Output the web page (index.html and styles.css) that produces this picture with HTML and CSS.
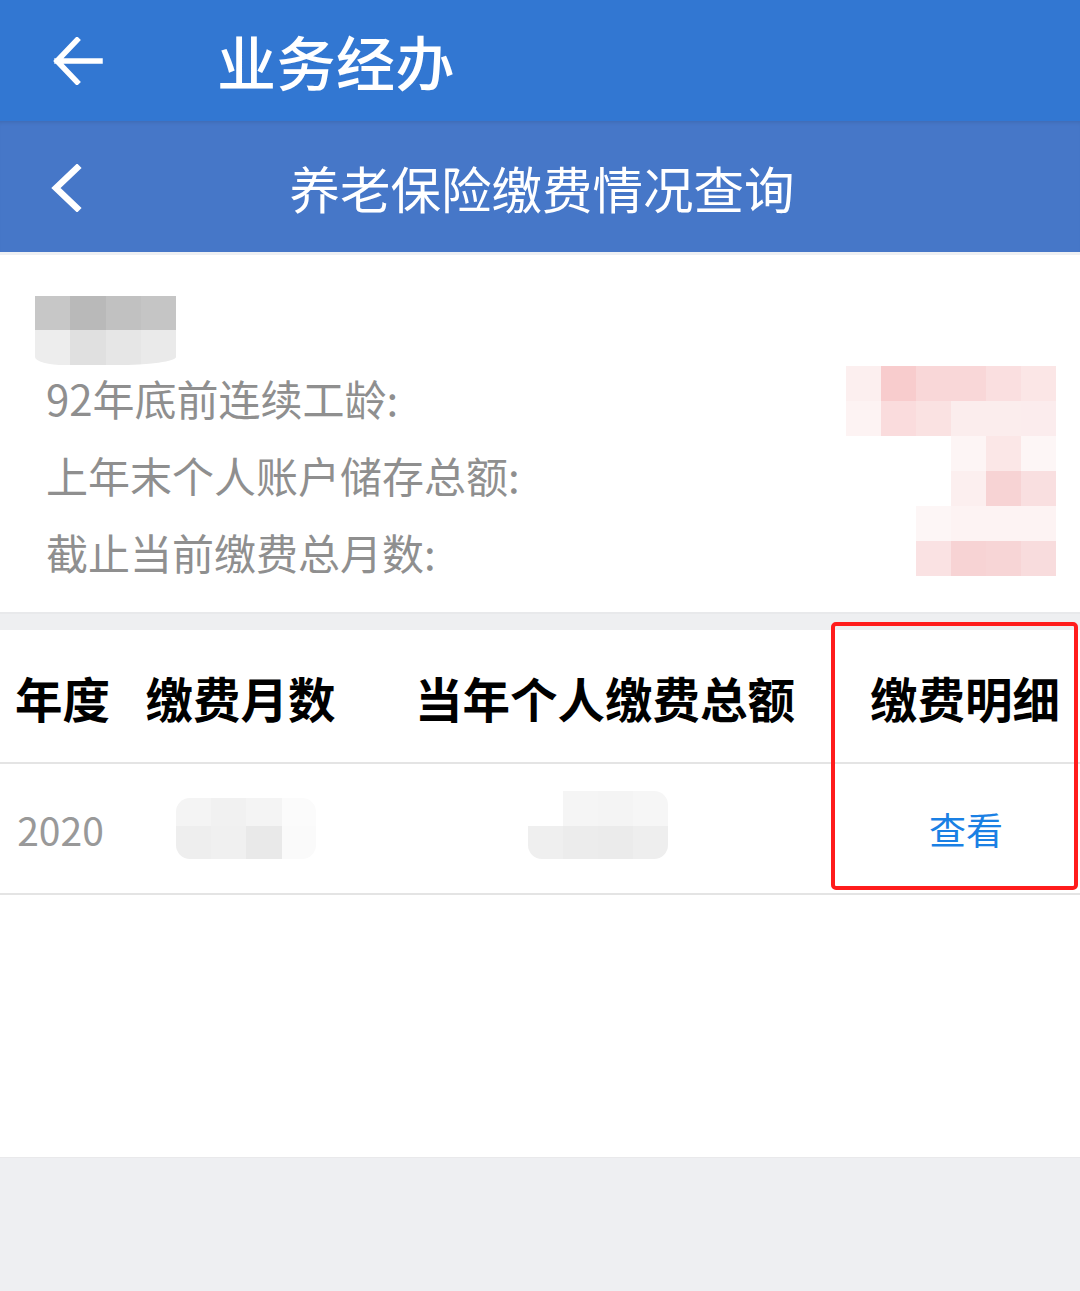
FILE: index.html
```html
<!DOCTYPE html>
<html lang="zh-CN">
<head>
<meta charset="UTF-8" />
<meta name="viewport" content="width=device-width, initial-scale=1" />
<title>养老保险缴费情况查询</title>
<link rel="stylesheet" href="styles.css">
</head>
<body>
<div class="app">
  <div class="topbar">
    <svg class="back-arrow" width="52" height="48" viewBox="0 0 52 48">
      <path d="M4 24 H47 M24 3 L4 24 L24 45" fill="none" stroke="#fff" stroke-width="5.5" stroke-linecap="square" stroke-linejoin="miter"/>
    </svg>
    <h1 class="topbar-title">业务经办</h1>
  </div>

  <div class="subbar">
    <svg class="chevron" width="32" height="48" viewBox="0 0 32 48">
      <path d="M27 4 L6 24 L27 44" fill="none" stroke="#fff" stroke-width="6.5" stroke-linecap="square"/>
    </svg>
    <h2 class="subbar-title">养老保险缴费情况查询</h2>
  </div>

  <div class="info">
    <div class="name-blur">
      <span style="background:#c7c7c7"></span><span style="background:#b9b9b9"></span><span style="background:#c1c1c1"></span><span style="background:#c5c5c5"></span>
      <span style="background:#ededed"></span><span style="background:#e0e0e0"></span><span style="background:#e6e6e6"></span><span style="background:#eaeaea"></span>
    </div>
    <div class="info-body">
      <ul class="labels">
        <li>92年底前连续工龄:</li>
        <li>上年末个人账户储存总额:</li>
        <li>截止当前缴费总月数:</li>
      </ul>
      <div class="value-blur">
        <span style="background:#fcefef"></span><span style="background:#f8cccd"></span><span style="background:#f9d7d8"></span><span style="background:#f9d7d8"></span><span style="background:#fadfe0"></span><span style="background:#fbe6e6"></span>
        <span style="background:#fdf3f3"></span><span style="background:#fadcdd"></span><span style="background:#fae2e2"></span><span style="background:#fbeded"></span><span style="background:#fbeded"></span><span style="background:#fbeced"></span>
        <span></span><span></span><span></span><span style="background:#fdf5f5"></span><span style="background:#fbe7e7"></span><span style="background:#fdf6f6"></span>
        <span></span><span></span><span></span><span style="background:#fcefef"></span><span style="background:#f7d3d4"></span><span style="background:#f9dfe0"></span>
        <span></span><span></span><span style="background:#fdf6f6"></span><span style="background:#fdf3f3"></span><span style="background:#fdf3f3"></span><span style="background:#fdf3f3"></span>
        <span></span><span></span><span style="background:#fae2e3"></span><span style="background:#f7d3d4"></span><span style="background:#f7d5d6"></span><span style="background:#f8dcdd"></span>
      </div>
    </div>
  </div>

  <div class="gap"></div>

  <div class="table">
    <div class="row head">
      <div class="cell">年度</div>
      <div class="cell">缴费月数</div>
      <div class="cell">当年个人缴费总额</div>
      <div class="cell">缴费明细</div>
    </div>
    <div class="row body">
      <div class="cell year">2020</div>
      <div class="cell">
        <div class="cell-blur months">
          <span style="background:#f4f4f4"></span><span style="background:#f1f1f1"></span><span style="background:#f4f4f4"></span><span style="background:#fbfbfb"></span>
          <span style="background:#eeeeee"></span><span style="background:#f0f0f0"></span><span style="background:#e9e9e9"></span><span style="background:#fafafa"></span>
        </div>
      </div>
      <div class="cell">
        <div class="cell-blur amount">
          <span></span><span style="background:#f5f5f5"></span><span style="background:#f4f4f4"></span><span style="background:#f6f6f6"></span>
          <span style="background:#efefef"></span><span style="background:#ececec"></span><span style="background:#ebebeb"></span><span style="background:#eeeeee"></span>
        </div>
      </div>
      <div class="cell"><a class="view-link">查看</a></div>
    </div>
    <div class="highlight"></div>
  </div>

  <div class="blank"></div>
  <div class="footer-space"></div>
</div>
</body>
</html>
```

FILE: styles.css
```css
* {
  box-sizing: border-box;
}
body {
  margin: 0;
  font-family: "Noto Sans CJK SC", "Noto Sans", sans-serif;
  background: #eeeff2;
}
.app {
  width: 1080px;
  min-height: 1291px;
  display: flex;
  flex-direction: column;
}

/* --- top bars --- */
.topbar {
  height: 121px;
  background: #3277d2;
  display: flex;
  align-items: center;
  padding-left: 53px;
}
.back-arrow {
  display: block;
}
.topbar-title {
  margin: 0 0 0 112px;
  color: #fff;
  font-size: 59px;
  font-weight: 500;
  letter-spacing: 0.5px;
}
.subbar {
  position: relative;
  height: 134px;
  background: #4677c8;
  display: flex;
  align-items: center;
  justify-content: center;
  box-shadow: inset 0 4px 4px -3px rgba(0,0,0,0.12);
  border-bottom: 3px solid #eef0f3;
}
.chevron {
  position: absolute;
  left: 50px;
  top: 43px;
}
.subbar-title {
  margin: 0;
  color: #fff;
  font-size: 50.5px;
  font-weight: 400;
  padding-left: 4px;
}

/* --- info block --- */
.info {
  background: #fff;
  padding: 41px 24px 22px 35px;
  border-bottom: 2px solid #e8e9eb;
}
.name-blur {
  width: 141px;
  height: 69px;
  display: grid;
  grid-template-columns: repeat(4, 1fr);
  grid-template-rows: 34px 35px;
  border-bottom-left-radius: 30px 8px;
  border-bottom-right-radius: 60px 8px;
  overflow: hidden;
}
.info-body {
  display: flex;
  justify-content: space-between;
  align-items: flex-start;
  margin-top: -6px;
}
.labels {
  list-style: none;
  margin: 0;
  padding: 0 0 0 11px;
  color: #8f8f8f;
  font-size: 42px;
  line-height: 77px;
}
.value-blur {
  margin-top: 7px;
  width: 210px;
  display: grid;
  grid-template-columns: repeat(6, 35px);
  grid-auto-rows: 35px;
}

.gap {
  height: 16px;
  background: #eeeff1;
}

/* --- table --- */
.table {
  position: relative;
  background: #fff;
}
.row {
  display: grid;
  grid-template-columns: 125px 235px 490px 230px;
  align-items: center;
  border-bottom: 2px solid #e4e4e4;
}
.row.head {
  height: 134px;
  font-size: 47.5px;
  font-weight: 700;
  color: #000;
}
.row.body {
  height: 131px;
}
.cell {
  text-align: center;
  display: flex;
  justify-content: center;
  align-items: center;
}
.row.head .cell {
  padding-top: 2px;
}
.row.head .cell:nth-child(2) {
  padding-right: 4px;
}
.year {
  color: #999;
  font-size: 39px;
  padding-right: 4px;
}
.cell-blur {
  display: grid;
  grid-template-rows: 28px 33px;
  border-radius: 14px;
  overflow: hidden;
}
.cell-blur.months {
  grid-template-columns: 35px 35px 36px 34px;
  margin-left: 6px;
}
.cell-blur.amount {
  grid-template-columns: repeat(4, 35px);
  margin-left: -14px;
  margin-top: -7px;
  grid-template-rows: 35px 33px;
}
.view-link {
  color: #1a80e4;
  font-size: 37px;
  padding-left: 2px;
}
.highlight {
  position: absolute;
  left: 831px;
  top: -8px;
  width: 247px;
  height: 268px;
  border: 4px solid #ff1c1c;
  border-radius: 5px;
}

.blank {
  height: 263px;
  background: #fff;
  border-bottom: 1px solid #e9e9eb;
}
.footer-space {
  flex: 1;
  background: #eeeff2;
}
```
